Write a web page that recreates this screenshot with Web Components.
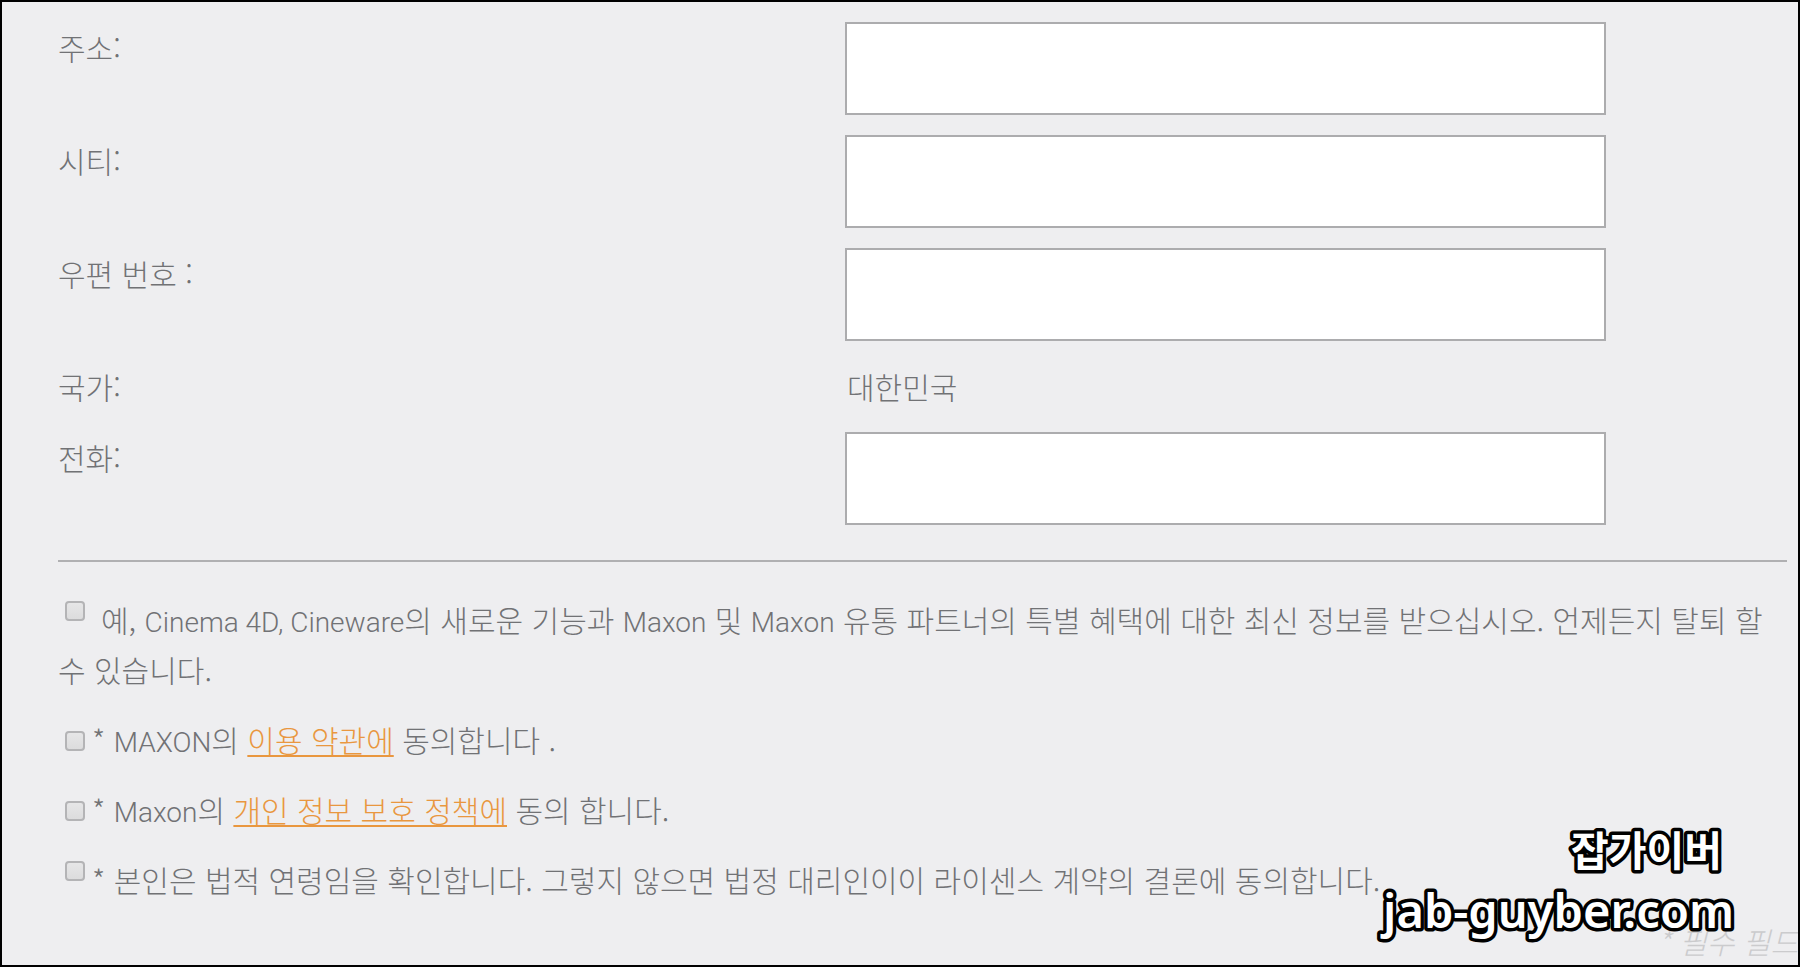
<!DOCTYPE html>
<html lang="ko">
<head>
<meta charset="utf-8">
<title>Maxon</title>
<style>
  * {
    box-sizing: border-box;
  }

  body {
    margin: 0;
    font-family: "Noto Sans CJK KR", sans-serif;
    font-size: 30px;
    font-weight: 300;
    line-height: 51px;
    color: #717275;
  }

  [lang="en"] {
    font-family: Roboto, sans-serif;
    font-size: 28px;
    line-height: 1;
  }
</style>
</head>
<body>
<registration-page>
  <form-field label="주소:" name="address"></form-field>
  <form-field label="시티:" name="city"></form-field>
  <form-field label="우편 번호 :" name="zip"></form-field>
  <form-field label="국가:" value="대한민국"></form-field>
  <form-field label="전화:" name="phone"></form-field>

  <consent-box slot="consents" name="newsletter" raised spaced>예, <span lang="en">Cinema 4D, Cineware</span>의 새로운 기능과 <span lang="en">Maxon</span> 및 <span lang="en">Maxon</span> 유통 파트너의 특별 혜택에 대한 최신 정보를 받으십시오. 언제든지 탈퇴 할 <span>수 있습니다.</span></consent-box>
  <consent-box slot="consents" name="terms">* <span lang="en">MAXON</span>의 <a href="#terms">이용 약관에</a> 동의합니다 .</consent-box>
  <consent-box slot="consents" name="privacy">* <span lang="en">Maxon</span>의 <a href="#privacy">개인 정보 보호 정책에</a> 동의 합니다.</consent-box>
  <consent-box slot="consents" name="age" raised>* 본인은 법적 연령임을 확인합니다. 그렇지 않으면 법정 대리인이이 라이센스 계약의 결론에 동의합니다.</consent-box>

  <span slot="note">* 필수 필드</span>
  <site-mark slot="mark" name="잡가이버" site="jab-guyber.com"></site-mark>
</registration-page>

<script>
class RegistrationPage extends HTMLElement {
  constructor() {
    super();
    this.attachShadow({mode: 'open'});
    this.shadowRoot.appendChild(this.#template());
  }

  #template() {
    const template = document.createElement('template');
    template.innerHTML =
    `
    <style>
      :host {
        display: block;
        position: relative;
        box-sizing: border-box;
        min-height: 100vh;
        padding: 20px 0 0 56px;
        border: 2px solid #000;
        background: #eeeef0;
        overflow: hidden;
      }

      form {
        margin-right: 11px;
      }

      .fields, .consents {
        display: flex;
        flex-direction: column;
        gap: 20px;
      }

      .consents {
        line-height: 50px;
      }

      hr {
        height: 2px;
        margin: 35px 0 32px;
        border: 0;
        background: #b0b0b2;
      }

      .note {
        margin: 15px 0 0;
        line-height: 44px;
        text-align: right;
        font-style: italic;
        color: #cbcbcd;
      }
    </style>

    <form>
      <div class="fields"><slot></slot></div>
      <hr>
      <div class="consents"><slot name="consents"></slot></div>
    </form>
    <p class="note"><slot name="note"></slot></p>
    <slot name="mark"></slot>
    `;
    return template.content.cloneNode(true);
  }
}

class FormField extends HTMLElement {
  constructor() {
    super();
    this.attachShadow({mode: 'open'});
    this.shadowRoot.appendChild(this.#template());
  }

  connectedCallback() {
    const label = this.shadowRoot.querySelector('label');
    const input = this.shadowRoot.querySelector('input');
    label.textContent = this.getAttribute('label');

    // A preset value is shown as plain text
    if (this.hasAttribute('value')) {
      const output = document.createElement('output');
      output.id = 'control';
      output.textContent = this.getAttribute('value');
      input.replaceWith(output);
    } else {
      input.name = this.getAttribute('name');
    }
  }

  #template() {
    const template = document.createElement('template');
    template.innerHTML =
    `
    <style>
      :host {
        display: grid;
        grid-template-columns: 787fr 761fr 181fr;
        align-items: start;
      }

      output {
        padding-left: 2px;
      }

      input {
        box-sizing: border-box;
        width: 100%;
        height: 93px;
        margin: 0;
        padding: 0 16px;
        border: 2px solid #acacae;
        border-radius: 0;
        background: #fff;
        font: inherit;
        color: inherit;
      }
    </style>

    <label for="control"></label>
    <input id="control" type="text">
    `;
    return template.content.cloneNode(true);
  }
}

class ConsentBox extends HTMLElement {
  constructor() {
    super();
    this.attachShadow({mode: 'open'});
    this.shadowRoot.appendChild(this.#template());
  }

  connectedCallback() {
    this.shadowRoot.querySelector('input').name = this.getAttribute('name');
  }

  #template() {
    const template = document.createElement('template');
    template.innerHTML =
    `
    <style>
      :host {
        display: block;
      }

      input {
        appearance: none;
        box-sizing: border-box;
        width: 20px;
        height: 20px;
        margin: 0 7px;
        border: 2px solid #b4b4b6;
        border-radius: 4px;
        background: linear-gradient(#e6e6e7, #dcdcdd);
        vertical-align: 1px;
      }

      input:checked {
        background: #e58f2c;
      }

      :host([raised]) input {
        vertical-align: 11px;
      }

      :host([spaced]) input {
        margin-right: 16px;
      }

      ::slotted(a) {
        color: #e9973f;
        text-decoration: underline;
        text-decoration-thickness: 2px;
        text-underline-offset: 3px;
        text-decoration-skip-ink: none;
      }
    </style>

    <label><input type="checkbox"><slot></slot></label>
    `;
    return template.content.cloneNode(true);
  }
}

class SiteMark extends HTMLElement {
  constructor() {
    super();
    this.attachShadow({mode: 'open'});
    this.shadowRoot.appendChild(this.#template());
  }

  connectedCallback() {
    this.shadowRoot.querySelector('.name').textContent = this.getAttribute('name');
    this.shadowRoot.querySelector('.site').textContent = this.getAttribute('site');
  }

  #template() {
    const template = document.createElement('template');
    template.innerHTML =
    `
    <style>
      :host {
        position: absolute;
        right: 64px;
        bottom: 12px;
      }

      svg {
        display: block;
        overflow: visible;
      }

      text {
        fill: #fff;
        stroke: #000;
        stroke-width: 7px;
        stroke-linejoin: round;
        paint-order: stroke fill;
        text-anchor: end;
      }

      .name {
        font-size: 41px;
        font-weight: 700;
      }

      .site {
        font-family: "Noto Sans", sans-serif;
        font-size: 47px;
        font-weight: 600;
      }
    </style>

    <svg width="380" height="136">
      <text class="name" x="368" y="49"></text>
      <text class="site" x="380" y="111"></text>
    </svg>
    `;
    return template.content.cloneNode(true);
  }
}

window.customElements.define('registration-page', RegistrationPage);
window.customElements.define('form-field', FormField);
window.customElements.define('consent-box', ConsentBox);
window.customElements.define('site-mark', SiteMark);
</script>
</body>
</html>
